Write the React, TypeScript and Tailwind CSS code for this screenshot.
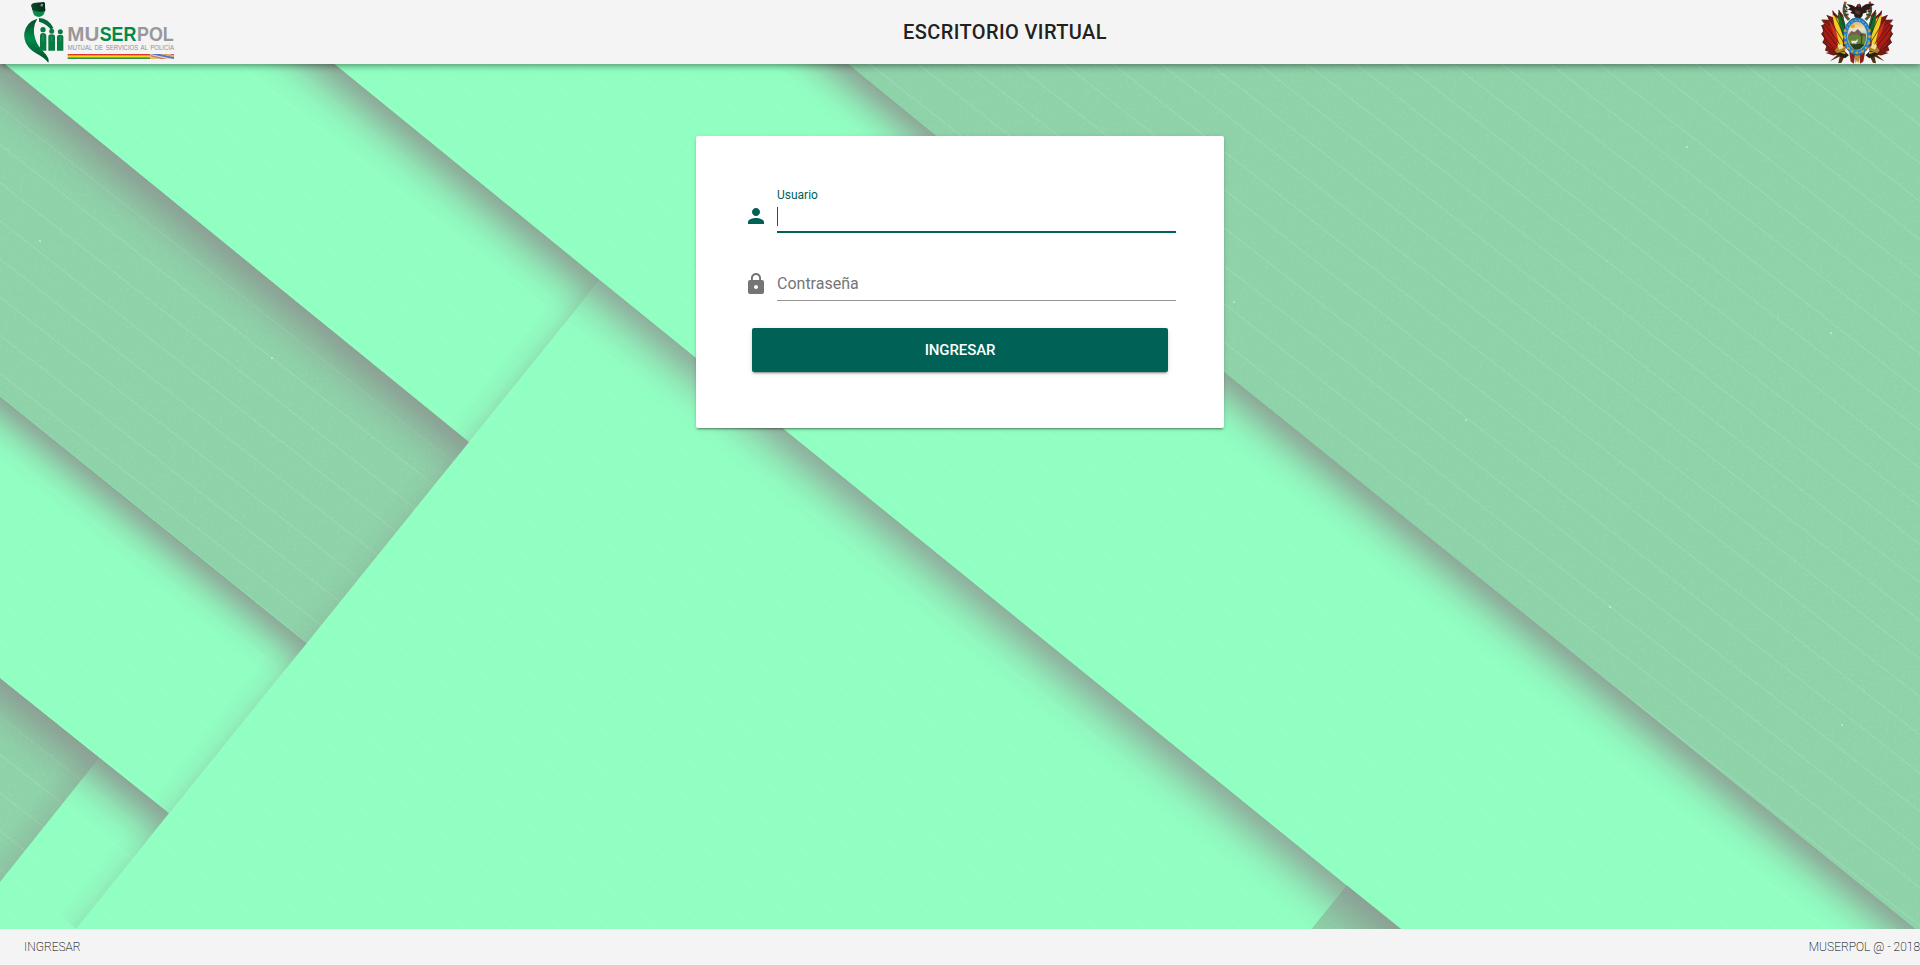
import React from "react";

const STRIP_ANGLE = 38.1;

type ShadeProps = { x1: number; y1: number; x2: number; y2: number; id: string; depth?: number; tone?: string };

function Shade({ x1, y1, x2, y2, id, depth = 60, tone = "#8c9e93" }: ShadeProps) {
  const dx = x2 - x1;
  const dy = y2 - y1;
  const len = Math.hypot(dx, dy);
  const nx = (-dy / len) * depth;
  const ny = (dx / len) * depth;
  return (
    <>
      <linearGradient id={id} gradientUnits="userSpaceOnUse" x1={x1} y1={y1} x2={x1 + nx} y2={y1 + ny}>
        <stop offset="0" stopColor={tone} stopOpacity="0.88" />
        <stop offset="0.14" stopColor={tone} stopOpacity="0.74" />
        <stop offset="0.32" stopColor={tone} stopOpacity="0.5" />
        <stop offset="0.52" stopColor={tone} stopOpacity="0.25" />
        <stop offset="0.75" stopColor={tone} stopOpacity="0.07" />
        <stop offset="1" stopColor={tone} stopOpacity="0" />
      </linearGradient>
      <polygon
        points={`${x1},${y1} ${x2},${y2} ${x2 + nx},${y2 + ny} ${x1 + nx},${y1 + ny}`}
        fill={`url(#${id})`}
      />
    </>
  );
}

function Backdrop() {
  return (
    <svg className="absolute inset-0 h-full w-full" viewBox="0 64 1920 865" preserveAspectRatio="none" aria-hidden="true">
      <defs>
        <pattern id="lines" width="400" height="30" patternUnits="userSpaceOnUse" patternTransform={`translate(1322 380) rotate(${STRIP_ANGLE})`}>
          <rect y="0" width="400" height="1" fill="#fff" />
        </pattern>
        <filter id="grain" x="0" y="0" width="100%" height="100%">
          <feTurbulence type="fractalNoise" baseFrequency="0.35" numOctaves="2" seed="4" />
          <feColorMatrix values="0 0 0 0 1  0 0 0 0 1  0 0 0 0 1  0 0 0 0.9 -0.4" />
        </filter>
        <linearGradient id="fold" gradientUnits="userSpaceOnUse" x1="469" y1="441" x2="449" y2="425">
          <stop offset="0" stopColor="#8aa596" stopOpacity="0.28" />
          <stop offset="0.35" stopColor="#8aa896" stopOpacity="0.12" />
          <stop offset="1" stopColor="#8aa896" stopOpacity="0" />
        </linearGradient>
        <linearGradient id="foldSmall" gradientUnits="userSpaceOnUse" x1="50" y1="820" x2="30" y2="804">
          <stop offset="0" stopColor="#8a9f93" stopOpacity="0.35" />
          <stop offset="1" stopColor="#8a9f93" stopOpacity="0" />
        </linearGradient>
        <clipPath id="dark">
          <path d="M0 60 L469 442 L307 643 L0 396 Z M0 678 L99 758 L0 882 Z M842 60 L1920 60 L1920 933 L1916 929 L1224 372 Z" />
        </clipPath>
        <clipPath id="c1"><path d="M0 60 L469 442 L307 643 L0 396 Z" /></clipPath>
        <clipPath id="c2"><path d="M0 396 L307 643 L169 813 L0 678 Z" /></clipPath>
        <clipPath id="c3"><path d="M0 678 L169 813 L76 929 L0 929 Z" /></clipPath>
        <clipPath id="c4"><path d="M0 678 L99 758 L0 882 Z" /></clipPath>
        <clipPath id="c5"><path d="M600 280 L1346.500 885 L1310 930 L76 930 Z" /></clipPath>
        <clipPath id="c7"><path d="M0 60 L330 60 L600 280 L469 442 Z" /></clipPath>
        <clipPath id="c6"><path d="M1346.500 885 L1404 931 L1310 931 Z" /></clipPath>
        <clipPath id="left"><path d="M0 60 L330 60 L600 280 L469 442 L76 929 L0 929 Z" /></clipPath>
      </defs>
      <rect y="60" width="1920" height="872" fill="#91ffc1" />
      <path d="M0 60 L469 442 L307 643 L0 396 Z M842 60 L1920 60 L1920 933 L1916 929 L1224 372 Z" fill="#8dd2a8" />
      <path d="M0 678 L99 758 L0 882 Z M1346.500 885 L1404 931 L1310 931 Z" fill="#8dd2a8" />
      <g clipPath="url(#dark)"><rect y="60" width="1920" height="872" filter="url(#grain)" opacity="0.2" /></g>
      <rect y="60" width="1920" height="872" fill="url(#lines)" opacity="0.08" />
      <g clipPath="url(#dark)"><rect y="60" width="1920" height="872" fill="url(#lines)" opacity="0.06" /></g>
      <g clipPath="url(#c1)"><Shade id="s1" x1={-80} y1={-5} x2={549} y2={507} tone="#8b9a92" /></g>
      <g clipPath="url(#c2)"><Shade id="s2" x1={-80} y1={332} x2={380} y2={702} depth={52} /></g>
      <g clipPath="url(#c3)"><Shade id="s3" x1={-80} y1={614} x2={249} y2={877} tone="#8b9a92" /></g>
      <g clipPath="url(#c7)"><Shade id="s7" x1={250} y1={-5} x2={680} y2={345} /></g>
      <g clipPath="url(#c5)"><Shade id="s5" x1={520} y1={215} x2={1450} y2={969} tone="#8ea498" /></g>
      <g clipPath="url(#c6)"><Shade id="s6" x1={1300} y1={847} x2={1450} y2={969} depth={66} tone="#8b9a92" /></g>
      <Shade id="s8" x1={780} y1={8.500} x2={1224} y2={371} depth={54} />
      <Shade id="s9" x1={1223} y1={371} x2={2035} y2={1025} depth={56} />
      <g clipPath="url(#left)"><path d="M600 280 L469 442 L76 929 L36 897 L560 247 Z" fill="url(#fold)" /></g>
      <g clipPath="url(#c4)"><path d="M99 758 L0 882 L-20 866 L79 742 Z" fill="url(#foldSmall)" /></g>
      <g fill="#d8ffe8" opacity="0.6">
        <circle cx="1466" cy="420" r="1.100" /><circle cx="272" cy="358" r="1.100" /><circle cx="40" cy="241" r="1" />
        <circle cx="1687" cy="147" r="1.100" /><circle cx="1842" cy="725" r="1" /><circle cx="1234" cy="302" r="1" />
        <circle cx="1610" cy="607" r="1" /><circle cx="1831" cy="333" r="1" />
      </g>
    </svg>
  );
}

function MuserpolLogo() {
  return (
    <svg className="block h-16 w-[154px] overflow-visible" viewBox="72 0 462 192" role="img" aria-label="Muserpol">
      <defs>
        <linearGradient id="cap" x1="0" x2="1"><stop offset="0" stopColor="#0b4a2b" /><stop offset="1" stopColor="#06291a" /></linearGradient>
        <linearGradient id="body" x1="0" y1="0" x2="0" y2="1"><stop offset="0" stopColor="#054d2a" /><stop offset="0.45" stopColor="#008a48" /><stop offset="1" stopColor="#034d2b" /></linearGradient>
      </defs>
      <path d="M97 27 Q98 50 116 51 Q134 50 136 28 Z" fill="#078a49" />
      <path d="M93 16 Q95 9 108 8 L132 6 Q137 9 135 19 L136 32 Q117 39 97 30 Z" fill="url(#cap)" />
      <path d="M123 11 L130 13 L127 20 L121 18 Z" fill="#7e9c8d" />
      <path d="M112 56 Q80 65 73 98 Q69 136 108 160 Q133 173 145 188 Q149 176 136 161 Q112 138 106 117 Q95 84 112 56 Z" fill="url(#body)" />
      <path d="M117 54 Q147 56 160 84 L153 89 Q139 71 117 65 Z" fill="#066b3a" />
      <g fill="#087b43">
        <circle cx="129" cy="89" r="8" /><circle cx="155" cy="94" r="7.500" /><circle cx="181" cy="95" r="7.500" />
        <path d="M120 152 V108 Q120 99 129 99 Q139 99 139 108 V152 Z M145 152 V110 Q145 103 155 103 Q165 103 165 110 V152 Z M171 152 V111 Q171 104 181 104 Q190 104 190 111 V152 Z" />
      </g>
      <path d="M129 104 V124 M155 108 V124 M181 108 V124" stroke="#5fa581" strokeWidth="1.500" />
      <g fontFamily="'Liberation Sans', Arial, sans-serif" fontSize="59" fontWeight="700">
        <text x="202" y="123" fill="#98989a" textLength="96" lengthAdjust="spacingAndGlyphs">MU</text>
        <text x="299" y="123" fill="#00894a" textLength="110" lengthAdjust="spacingAndGlyphs">SER</text>
        <text x="411" y="123" fill="#98989a" textLength="110" lengthAdjust="spacingAndGlyphs">POL</text>
      </g>
      <text y="151" x="203" fontFamily="'Liberation Sans', Arial, sans-serif" fontSize="23" wordSpacing="4" fill="#8f8f91" textLength="319" lengthAdjust="spacingAndGlyphs">MUTUAL DE SERVICIOS AL POLICÍA</text>
      <rect x="203" y="162" width="248" height="5" fill="#e0322b" />
      <rect x="203" y="167" width="248" height="5" fill="#f4d51f" />
      <rect x="203" y="172" width="248" height="5" fill="#2f9347" />
      <rect x="451" y="162" width="71" height="15" fill="#d9cfd0" />
      <path d="M451 162 L522 177 V172 L480 162 Z" fill="#5277b6" />
      <path d="M451 165 L500 177 H484 L451 169 Z" fill="#dc6b5a" />
      <path d="M451 170 L475 177 H451 Z" fill="#d8c33c" />
      <path d="M484 162 L522 171 V167 L500 162 Z" fill="#dda04e" />
      <path d="M507 162 L522 166 V162 Z" fill="#c9525c" />
    </svg>
  );
}

function FlagFan() {
  return (
    <g>
      <path d="M132 45 L119 29 L118 48 L101 31 L103 51 L86 44 L91 58 L70 57 L80 70 L70 74 L75 91 L70 99 L78 113 L73 124 L84 135 L80 148 L94 154 L106 157 L119 166 L136 149 L142 105 Z" fill="#7c1a16" />
      <path d="M101 42 L118 56 L133 82 L130 135 L117 132 Z" fill="#f0cf25" />
      <path d="M117 36 L131 50 L138 71 L131 106 L119 65 Z" fill="#126c30" />
      <path d="M80 67 L97 79 L118 136 L103 150 L88 132 L77 96 Z" fill="#ac1a16" />
      <path d="M91 59 L108 76 L120 126 L110 120 Z" fill="#cf301b" />
      <path d="M71 59 L133 145 M85 44 L137 131 M102 31 L139 116 M119 29 L141 96 M70 75 L128 153 M70 99 L119 162 M73 124 L113 155" stroke="#33160f" strokeWidth="2" fill="none" />
      <path d="M106 150 L122 130 L140 138 L135 158 L121 167 Z" fill="#b08028" />
      <path d="M115 134 L129 127 L133 140 L121 146 Z" fill="#eddf92" />
      <path d="M94 180 L125 153 L138 160 L127 184 L118 186 L122 166 Z" fill="#50300f" />
      <path d="M82 156 L108 148 L118 160 L104 163 Z" fill="#6b1c14" />
      <path d="M112 157 L135 149 L148 162 L137 171 L124 165 Z" fill="#281f16" />
      <path d="M122 154 L138 151 L138 159 Z" fill="#c19932" />
    </g>
  );
}

function CoatOfArms() {
  return (
    <svg className="block h-16 w-[74px]" viewBox="66 0 210 188" preserveAspectRatio="none" role="img" aria-label="Escudo de Bolivia">
      <defs>
        <linearGradient id="sky" x1="0" x2="0" y1="0" y2="1">
          <stop offset="0" stopColor="#f1b55b" /><stop offset="0.25" stopColor="#e8e6cf" /><stop offset="0.5" stopColor="#9cbfc0" /><stop offset="0.65" stopColor="#6e8f3d" /><stop offset="1" stopColor="#3c5e26" />
        </linearGradient>
      </defs>
      <FlagFan />
      <g transform="translate(343 0) scale(-1 1)"><FlagFan /></g>
      <path d="M149 153 L166 159 L162 187 L153 181 Z M194 153 L177 159 L180 187 L189 181 Z" fill="#8d2119" />
      <path d="M164 158 H179 L175 187 L171 176 L167 187 Z" fill="#b88c2b" />
      <path d="M134 8 Q122 39 145 61 L152 56 Q132 39 140 12 Z M210 8 Q222 39 199 61 L192 56 Q212 39 204 12 Z" fill="#4c5f3b" />
      <path d="M133 16 L143 24 M131 31 L144 34 M134 45 L147 42 M211 16 L201 24 M213 31 L201 34 M210 45 L197 42" stroke="#34432b" strokeWidth="5" />
      <path d="M135 6 l6 4 M140 26 l4 3 M205 9 l5 -3 M202 28 l5 3 M139 50 l5 2 M200 52 l5 -3" stroke="#a8372b" strokeWidth="5" />
      <path d="M141 12 Q158 13 168 21 Q171 11 179 11 Q184 15 183 23 Q191 10 214 10 L221 14 L207 20 L211 25 L198 30 L199 37 L188 40 Q187 52 176 55 Q161 53 163 42 L152 38 L157 32 L145 28 L152 23 Z" fill="#2c1a19" />
      <path d="M172 13 Q180 10 181 17 L175 21 Z" fill="#8d3a2c" />
      <path d="M165 29 L181 34 L177 44 L167 39 Z" fill="#553631" />
      <ellipse cx="171.500" cy="107" rx="39" ry="55" fill="#277ec4" stroke="#245275" strokeWidth="2" />
      <ellipse cx="171.500" cy="107" rx="34" ry="48" fill="none" stroke="#65b4df" strokeWidth="4" strokeDasharray="4 7" />
      <g fill="#c99f30">
        <circle cx="137" cy="90" r="4" /><circle cx="136" cy="108" r="4" /><circle cx="138" cy="126" r="4" /><circle cx="146" cy="141" r="4" />
        <circle cx="157" cy="151" r="4" /><circle cx="171" cy="155" r="4" /><circle cx="186" cy="151" r="4" /><circle cx="197" cy="141" r="4" />
        <circle cx="205" cy="126" r="4" /><circle cx="207" cy="108" r="4" /><circle cx="206" cy="90" r="4" />
      </g>
      <ellipse cx="171.500" cy="106" rx="27" ry="41" fill="url(#sky)" stroke="#e6d8a3" strokeWidth="2" />
      <circle cx="159" cy="77" r="6" fill="#f2a41f" />
      <path d="M146 103 L155 91 L164 95 L173 85 L184 97 L196 99 L197 113 L146 114 Z" fill="#765b50" />
      <path d="M147 106 Q164 96 179 105 L196 107 L196 120 Q171 127 146 118 Z" fill="#65833a" />
      <path d="M154 120 h14 l5 -6 v8 l-4 3 v8 h-2 v-6 h-9 v6 h-2 v-8 Z" fill="#e8e5dc" />
      <path d="M150 128 L163 131 L181 128 L192 132 L178 145 L164 146 Z" fill="#273d20" />
      <path d="M184 104 v24 M180 105 q4 -7 8 0" stroke="#304a23" strokeWidth="3" fill="none" />
    </svg>
  );
}

function UserIcon() {
  return (
    <svg className="h-6 w-6 fill-[#006156]" viewBox="0 0 24 24" aria-hidden="true">
      <path d="M12 12c2.210 0 4-1.790 4-4s-1.790-4-4-4-4 1.790-4 4 1.790 4 4 4zm0 2c-2.670 0-8 1.340-8 4v2h16v-2c0-2.660-5.330-4-8-4z" />
    </svg>
  );
}

function LockIcon() {
  return (
    <svg className="h-6 w-6 fill-[#757575]" viewBox="0 0 24 24" aria-hidden="true">
      <path d="M18 8h-1V6c0-2.760-2.240-5-5-5S7 3.240 7 6v2H6c-1.100 0-2 .9-2 2v10c0 1.100.9 2 2 2h12c1.100 0 2-.9 2-2V10c0-1.100-.9-2-2-2zm-6 9c-1.100 0-2-.9-2-2s.9-2 2-2 2 .9 2 2-.9 2-2 2zm3.100-9H8.900V6c0-1.710 1.390-3.100 3.100-3.100 1.710 0 3.100 1.390 3.100 3.100v2z" />
    </svg>
  );
}

export default function App() {
  return (
    <div className="flex h-[965px] flex-col overflow-hidden font-['Roboto','Liberation_Sans',sans-serif] text-[#212121]">
      <header className="z-10 flex h-16 shrink-0 items-center bg-[#f4f4f4] pr-[26px] pl-6 shadow-[0_2px_4px_-1px_rgba(0,0,0,.2),0_4px_5px_0_rgba(0,0,0,.14),0_1px_10px_0_rgba(0,0,0,.12)]">
        <div className="flex w-[879px]"><MuserpolLogo /></div>
        <h1 className="text-xl leading-none font-medium tracking-[.02em]">ESCRITORIO VIRTUAL</h1>
        <div className="ml-auto"><CoatOfArms /></div>
      </header>

      <main className="relative flex flex-1 items-start justify-center pt-[72px]">
        <Backdrop />
        <form className="relative flex h-[292px] w-[528px] flex-col rounded-[2px] bg-white px-12 pt-[50px] shadow-[0_3px_1px_-2px_rgba(0,0,0,.2),0_2px_2px_0_rgba(0,0,0,.14),0_1px_5px_0_rgba(0,0,0,.12)]">
          <div className="flex items-end gap-[9px]">
            <span className="pb-[5px]"><UserIcon /></span>
            <label className="flex flex-1 flex-col text-xs leading-[18px] text-[#006156]">
              Usuario
              <span className="flex h-[29px] items-start border-b-2 border-[#006156] pt-[3px]">
                <span className="h-[19px] w-px bg-[#006156]" />
              </span>
            </label>
          </div>
          <div className="mt-[35px] flex items-end gap-[9px]">
            <span className="pb-[5px]"><LockIcon /></span>
            <label className="flex h-[33px] flex-1 items-center border-b border-[#949494] text-base leading-none text-[#757575]">Contraseña</label>
          </div>
          <button type="button" className="mx-2 mt-[27px] h-11 rounded-[2px] bg-[#006156] text-[15px] font-medium tracking-[-.1px] text-white shadow-[0_3px_1px_-2px_rgba(0,0,0,.2),0_2px_2px_0_rgba(0,0,0,.14),0_1px_5px_0_rgba(0,0,0,.12)]">
            INGRESAR
          </button>
        </form>
      </main>

      <footer className="z-10 flex h-9 shrink-0 items-center justify-between bg-[#f4f4f4] pl-6 text-xs font-extralight text-black">
        <span>INGRESAR</span>
        <span>MUSERPOL @ - 2018</span>
      </footer>
    </div>
  );
}
